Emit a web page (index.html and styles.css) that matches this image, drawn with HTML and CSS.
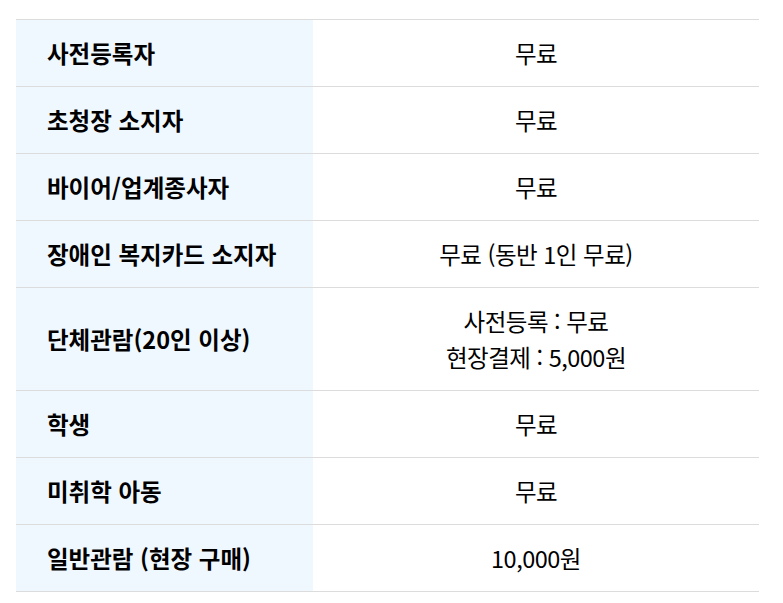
FILE: index.html
```html
<!DOCTYPE html>
<html lang="ko">
<head>
<meta charset="utf-8">
<link rel="stylesheet" href="styles.css">
</head>
<body>
<div class="wrap">
<table class="price">
<tbody>
<tr><th>사전등록자</th><td>무료</td></tr>
<tr><th>초청장 소지자</th><td>무료</td></tr>
<tr><th>바이어/업계종사자</th><td>무료</td></tr>
<tr><th>장애인 복지카드 소지자</th><td>무료 (동반 1인 무료)</td></tr>
<tr><th>단체관람(20인 이상)</th><td>사전등록 : 무료<br>현장결제 : 5,000원</td></tr>
<tr><th>학생</th><td>무료</td></tr>
<tr><th>미취학 아동</th><td>무료</td></tr>
<tr><th>일반관람 (현장 구매)</th><td>10,000원</td></tr>
</tbody>
</table>
</div>
</body>
</html>
```

FILE: styles.css
```css
html, body {
  margin: 0;
  padding: 0;
  background: #fff;
}
.wrap {
  padding: 19px 24px 0 16px;
}
.price {
  width: 743px;
  border-collapse: collapse;
  font-family: "Noto Sans CJK KR", "Noto Sans", sans-serif;
  font-size: 23.5px;
  line-height: 36px;
  color: #000;
  border-top: 1px solid #dcdcdc;
}
.price th, .price td {
  border-bottom: 1px solid #dcdcdc;
  padding: 15px 0;
  height: 36px;
  vertical-align: middle;
}
.price th {
  width: 266px;
  padding-left: 31px;
  text-align: left;
  font-weight: 700;
  background: #f0f8ff;
}
.price td {
  text-align: center;
  font-weight: 400;
  letter-spacing: -0.5px;
}
```
